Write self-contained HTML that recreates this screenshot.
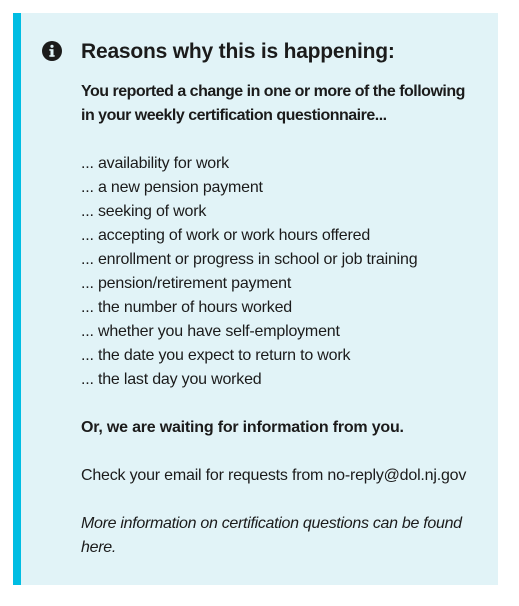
<!DOCTYPE html>
<html><head><style>
html,body{margin:0;padding:0;background:#fff;width:519px;height:606px;overflow:hidden}
.box{position:absolute;left:13px;top:13px;width:477px;height:572px;background:#e1f3f7;border-left:8px solid #00bde3}
.ic{position:absolute;left:21px;top:28px}
h2{position:absolute;left:60px;top:26px;margin:0;font:bold 21px/26px "Liberation Sans",sans-serif;color:#1b1b1b;letter-spacing:-0.2px}
.t{position:absolute;left:60px;top:67px;width:410px;font:16px/24px "Liberation Sans",sans-serif;color:#1b1b1b;letter-spacing:-0.2px;white-space:nowrap}
p{margin:0 0 24px}
b{font-weight:bold;letter-spacing:-0.5px}
i{letter-spacing:-0.3px}
</style></head><body>
<div class="box">
<svg class="ic" width="20" height="20" viewBox="0 0 20 20"><circle cx="10" cy="10" r="10" fill="#1b1b1b"/><circle cx="10" cy="5.3" r="1.6" fill="#e1f3f7"/><rect x="8.5" y="8.2" width="3" height="7.5" fill="#e1f3f7"/><rect x="7.3" y="8.2" width="2" height="1.5" fill="#e1f3f7"/><rect x="7.3" y="14.2" width="5.4" height="1.5" fill="#e1f3f7"/></svg>
<h2>Reasons why this is happening:</h2>
<div class="t">
<p><b>You reported a change in one or more of the following<br>in your weekly certification questionnaire...</b></p>
<p>... availability for work<br>... a new pension payment<br>... seeking of work<br>... accepting of work or work hours offered<br>... enrollment or progress in school or job training<br>... pension/retirement payment<br>... the number of hours worked<br>... whether you have self-employment<br>... the date you expect to return to work<br>... the last day you worked</p>
<p><b style="letter-spacing:-0.2px">Or, we are waiting for information from you.</b></p>
<p>Check your email for requests from no-reply@dol.nj.gov</p>
<p><i>More information on certification questions can be found<br>here.</i></p>
</div>
</div>
</body></html>
